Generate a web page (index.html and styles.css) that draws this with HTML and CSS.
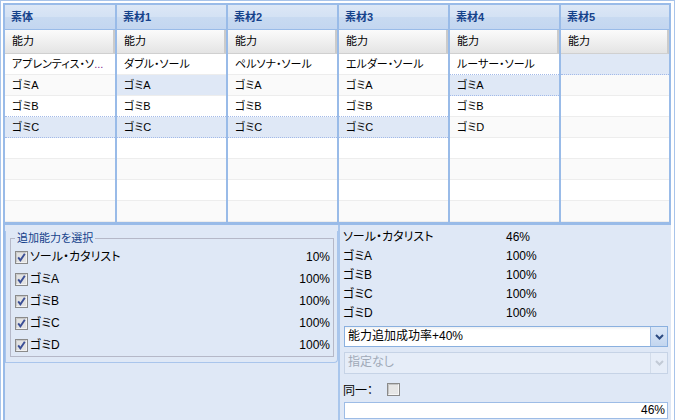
FILE: index.html
```html
<!DOCTYPE html>
<html lang="ja">
<head>
<meta charset="utf-8">
<title>素材</title>
<link rel="stylesheet" href="styles.css">
</head>
<body>
<div class="app">
  <div class="grids">
    <div class="col">
      <div class="col-title">素体</div>
      <div class="col-head">能力</div>
      <div class="row">アプレンティス・ソ<span class="dots">...</span></div>
      <div class="row alt">ゴミA</div>
      <div class="row pre">ゴミB</div>
      <div class="row alt sel">ゴミC</div>
      <div class="row"></div>
      <div class="row alt"></div>
      <div class="row"></div>
      <div class="row alt"></div>
    </div>
    <div class="col">
      <div class="col-title">素材1</div>
      <div class="col-head">能力</div>
      <div class="row">ダブル・ソール</div>
      <div class="row alt hl">ゴミA</div>
      <div class="row pre">ゴミB</div>
      <div class="row alt sel">ゴミC</div>
      <div class="row"></div>
      <div class="row alt"></div>
      <div class="row"></div>
      <div class="row alt"></div>
    </div>
    <div class="col">
      <div class="col-title">素材2</div>
      <div class="col-head">能力</div>
      <div class="row">ペルソナ・ソール</div>
      <div class="row alt">ゴミA</div>
      <div class="row pre">ゴミB</div>
      <div class="row alt sel">ゴミC</div>
      <div class="row"></div>
      <div class="row alt"></div>
      <div class="row"></div>
      <div class="row alt"></div>
    </div>
    <div class="col">
      <div class="col-title">素材3</div>
      <div class="col-head">能力</div>
      <div class="row">エルダー・ソール</div>
      <div class="row alt">ゴミA</div>
      <div class="row pre">ゴミB</div>
      <div class="row alt sel">ゴミC</div>
      <div class="row"></div>
      <div class="row alt"></div>
      <div class="row"></div>
      <div class="row alt"></div>
    </div>
    <div class="col">
      <div class="col-title">素材4</div>
      <div class="col-head">能力</div>
      <div class="row pre">ルーサー・ソール</div>
      <div class="row alt sel">ゴミA</div>
      <div class="row">ゴミB</div>
      <div class="row alt">ゴミD</div>
      <div class="row"></div>
      <div class="row alt"></div>
      <div class="row"></div>
      <div class="row alt"></div>
    </div>
    <div class="col">
      <div class="col-title">素材5</div>
      <div class="col-head">能力</div>
      <div class="row sel"></div>
      <div class="row alt"></div>
      <div class="row"></div>
      <div class="row alt"></div>
      <div class="row"></div>
      <div class="row alt"></div>
      <div class="row"></div>
      <div class="row alt"></div>
    </div>
  </div>

  <div class="bottom">
    <div class="left">
      <div class="formbox">
        <fieldset class="abilities">
          <legend>追加能力を選択</legend>
          <div class="chk-row">
            <svg class="cb" width="13" height="13" viewBox="0 0 13 13"><rect x="0.5" y="0.5" width="12" height="12" fill="#e2e2e2" stroke="#8a8a8a"/><path d="M1.5 11.5V1.5H11.5" fill="none" stroke="#c9c9c9"/><path d="M1.5 11.5H11.5V1.5" fill="none" stroke="#f2f2f2"/><path d="M3.2 6.4L5.4 9.4L9.8 2.8" fill="none" stroke="#3b4f96" stroke-width="1.9"/></svg>
            <span class="chk-label">ソール・カタリスト</span>
            <span class="chk-val">10%</span>
          </div>
          <div class="chk-row">
            <svg class="cb" width="13" height="13" viewBox="0 0 13 13"><rect x="0.5" y="0.5" width="12" height="12" fill="#e2e2e2" stroke="#8a8a8a"/><path d="M1.5 11.5V1.5H11.5" fill="none" stroke="#c9c9c9"/><path d="M1.5 11.5H11.5V1.5" fill="none" stroke="#f2f2f2"/><path d="M3.2 6.4L5.4 9.4L9.8 2.8" fill="none" stroke="#3b4f96" stroke-width="1.9"/></svg>
            <span class="chk-label">ゴミA</span>
            <span class="chk-val">100%</span>
          </div>
          <div class="chk-row">
            <svg class="cb" width="13" height="13" viewBox="0 0 13 13"><rect x="0.5" y="0.5" width="12" height="12" fill="#e2e2e2" stroke="#8a8a8a"/><path d="M1.5 11.5V1.5H11.5" fill="none" stroke="#c9c9c9"/><path d="M1.5 11.5H11.5V1.5" fill="none" stroke="#f2f2f2"/><path d="M3.2 6.4L5.4 9.4L9.8 2.8" fill="none" stroke="#3b4f96" stroke-width="1.9"/></svg>
            <span class="chk-label">ゴミB</span>
            <span class="chk-val">100%</span>
          </div>
          <div class="chk-row">
            <svg class="cb" width="13" height="13" viewBox="0 0 13 13"><rect x="0.5" y="0.5" width="12" height="12" fill="#e2e2e2" stroke="#8a8a8a"/><path d="M1.5 11.5V1.5H11.5" fill="none" stroke="#c9c9c9"/><path d="M1.5 11.5H11.5V1.5" fill="none" stroke="#f2f2f2"/><path d="M3.2 6.4L5.4 9.4L9.8 2.8" fill="none" stroke="#3b4f96" stroke-width="1.9"/></svg>
            <span class="chk-label">ゴミC</span>
            <span class="chk-val">100%</span>
          </div>
          <div class="chk-row">
            <svg class="cb" width="13" height="13" viewBox="0 0 13 13"><rect x="0.5" y="0.5" width="12" height="12" fill="#e2e2e2" stroke="#8a8a8a"/><path d="M1.5 11.5V1.5H11.5" fill="none" stroke="#c9c9c9"/><path d="M1.5 11.5H11.5V1.5" fill="none" stroke="#f2f2f2"/><path d="M3.2 6.4L5.4 9.4L9.8 2.8" fill="none" stroke="#3b4f96" stroke-width="1.9"/></svg>
            <span class="chk-label">ゴミD</span>
            <span class="chk-val">100%</span>
          </div>
        </fieldset>
      </div>
    </div>

    <div class="right">
      <div class="stat"><span class="stat-name">ソール・カタリスト</span><span>46%</span></div>
      <div class="stat"><span class="stat-name">ゴミA</span><span>100%</span></div>
      <div class="stat"><span class="stat-name">ゴミB</span><span>100%</span></div>
      <div class="stat"><span class="stat-name">ゴミC</span><span>100%</span></div>
      <div class="stat"><span class="stat-name">ゴミD</span><span>100%</span></div>

      <div class="combo">
        <div class="combo-text">能力追加成功率+40%</div>
        <div class="combo-btn"><svg width="9" height="6" viewBox="0 0 9 6"><path d="M1 1L4.5 4.5L8 1" fill="none" stroke="#2c4a80" stroke-width="2"/></svg></div>
      </div>
      <div class="combo disabled">
        <div class="combo-text">指定なし</div>
        <div class="combo-btn"><svg width="9" height="6" viewBox="0 0 9 6"><path d="M1 1L4.5 4.5L8 1" fill="none" stroke="#c2cad6" stroke-width="2"/></svg></div>
      </div>

      <div class="same">
        <span class="same-label">同一：</span>
        <svg class="cb" width="13" height="13" viewBox="0 0 13 13"><rect x="0.5" y="0.5" width="12" height="12" fill="#e6e6e6" stroke="#8a8a8a"/><path d="M1.5 11.5V1.5H11.5" fill="none" stroke="#c4c4c4"/><path d="M1.5 11.5H11.5V1.5" fill="none" stroke="#f6f6f6"/></svg>
      </div>

      <div class="result">46%</div>
    </div>
  </div>
</div>
</body>
</html>
```

FILE: styles.css
```css
* {
  box-sizing: border-box;
}

html,
body {
  margin: 0;
  padding: 0;
  background: #ffffff;
}

body {
  font-family: "Liberation Sans", "Noto Sans CJK JP", sans-serif;
  font-size: 12px;
  color: #000000;
  font-feature-settings: "palt" 1;
}

.app {
  width: 675px;
  height: 420px;
  border: 1px solid #a8c4ea;
  border-bottom: 0;
  padding: 2px 3px 0 2px;
  display: flex;
  flex-direction: column;
  overflow: hidden;
}

/* ---------- grids ---------- */
.grids {
  display: grid;
  grid-template-columns: 112px 111px 111px 111px 111px 112px;
  height: 222px;
  border-bottom: 3px solid #99bbe8;
  flex: none;
}

.col {
  min-width: 0;
  border-left: 2px solid #99bbe8;
  border-top: 2px solid #99bbe8;
  background: #ffffff;
  overflow: hidden;
}

.col:last-child {
  border-right: 2px solid #99bbe8;
}

.col-title {
  height: 25px;
  border-bottom: 1px solid #99bbe8;
  background: linear-gradient(#dce7f6 0%, #d4e2f4 48%, #c8daf1 52%, #c3d6f0 100%);
  color: #15428b;
  font-weight: bold;
  font-size: 11px;
  line-height: 24px;
  padding-left: 6px;
}

.col-head {
  height: 24px;
  border-bottom: 1px solid #d0d0d0;
  border-right: 2px solid #cbcbcb;
  background: linear-gradient(#fbfbfb, #e4e4e4);
  font-size: 11px;
  line-height: 23px;
  padding-left: 7px;
}

.row {
  height: 21px;
  border-bottom: 1px solid #ededed;
  font-size: 11px;
  line-height: 20px;
  padding: 0 4px 0 7px;
  white-space: nowrap;
  overflow: hidden;
}

.dots {
  color: #7a2a90;
}

.alt {
  background: #fafafa;
}

.hl,
.sel {
  background: #dfe8f6;
}

.sel,
.pre {
  border-bottom: 1px dotted #a3bae9;
}

/* ---------- bottom ---------- */
.bottom {
  flex: 1;
  min-height: 0;
  display: flex;
  background: #dfe8f6;
}

.left {
  width: 335px;
  flex: none;
  border-left: 2px solid #99bbe8;
}

.formbox {
  border: 1px solid #a9c5ec;
  border-top: 0;
  border-radius: 0 0 4px 0;
  padding: 0 3px 5px 4px;
}

.abilities {
  margin: 6px 0 0 0;
  border: 1px solid #b5b8c8;
  padding: 1px 3px 0 4px;
  min-width: 0;
}

.abilities legend {
  padding: 0 2px;
  font-size: 11px;
  line-height: 14px;
  color: #15428b;
}

.chk-row {
  display: flex;
  align-items: center;
  height: 22px;
  line-height: 16px;
}

.cb {
  display: block;
  flex: none;
}

.chk-label {
  margin-left: 2px;
  white-space: nowrap;
}

.chk-val {
  margin-left: auto;
}

.right {
  flex: 1;
  min-width: 0;
  border-left: 2px solid #a9c6ec;
  padding: 3px 3px 0 3px;
}

.stat {
  display: flex;
  height: 19px;
  line-height: 19px;
  white-space: nowrap;
}

.stat-name {
  width: 163px;
  flex: none;
}

.combo {
  display: flex;
  height: 21px;
  margin: 3px 0 0 1px;
  border: 1px solid #8ab0df;
  background: linear-gradient(#eef0f3 0px, #ffffff 3px, #ffffff 100%);
}

.combo-text {
  flex: 1;
  padding-left: 3px;
  line-height: 19px;
  white-space: nowrap;
  overflow: hidden;
}

.combo-btn {
  width: 17px;
  flex: none;
  border-left: 1px solid #9dbbe3;
  background: linear-gradient(#dbe7f7, #c3d6ef);
  display: flex;
  align-items: center;
  justify-content: center;
}

.combo.disabled {
  height: 22px;
  margin-top: 5px;
  border-color: #c6d3e6;
  background: #e6edf8;
  color: #a0a9b7;
}

.combo.disabled .combo-btn {
  border-left-color: #d2dcea;
  background: #e6edf8;
}

.same {
  display: flex;
  align-items: center;
  height: 22px;
  margin-top: 4px;
}

.same-label {
  width: 44px;
  flex: none;
}

.result {
  height: 17px;
  margin: 2px 0 0 1px;
  border: 1px solid #9dbce6;
  background: #ffffff;
  text-align: right;
  padding-right: 2px;
  line-height: 15px;
}
```
